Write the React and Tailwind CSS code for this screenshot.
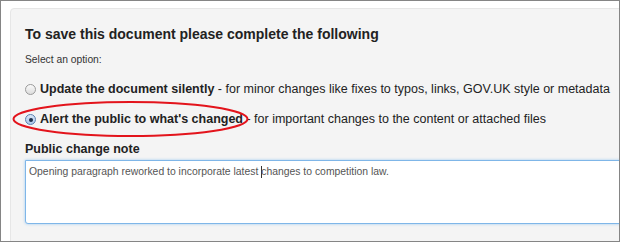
export default function App() {
  return (
    <div
      className="w-[620px] h-[242px] border border-[#858585] bg-white overflow-hidden relative"
      style={{ fontFamily: '"Liberation Sans", Arial, sans-serif' }}
    >
      <div className="mt-[7px] ml-[9px] w-[700px] h-[300px] bg-[#f4f4f4] border border-[#e6e6e6] rounded-tl-[4px] pl-[14px] pt-[17px]">
        <h2 className="text-[14px] font-bold text-[#222] leading-[17px]">
          To save this document please complete the following
        </h2>
        <p className="text-[10.3px] text-[#333] mt-[10px] leading-[13px]">Select an option:</p>
        <div className="mt-[16px] flex items-center gap-[4px] text-[12.5px] text-[#222] leading-[15px]">
          <span className="w-[11px] h-[11px] rounded-full border border-[#9a9a9a] bg-gradient-to-b from-[#fafafa] to-[#dcdcdc] shrink-0" />
          <span>
            <b>Update the document silently</b> - for minor changes like fixes to typos, links, GOV.UK style or metadata
          </span>
        </div>
        <div className="mt-[15px] flex items-center gap-[4px] text-[12.5px] text-[#222] leading-[15px] relative">
          <span className="w-[11px] h-[11px] rounded-full border border-[#5a7fb0] bg-gradient-to-b from-[#dbe8f7] to-[#a9c6ea] shrink-0 flex items-center justify-center">
            <span className="w-[4px] h-[4px] rounded-full bg-[#1d2f4a]" />
          </span>
          <span>
            <b>Alert the public to what's changed</b> - for important changes to the content or attached files
          </span>
          <svg
            className="absolute left-[-13px] top-[-17px]"
            width="240"
            height="44"
            viewBox="0 0 240 44"
          >
            <ellipse cx="118.5" cy="24" rx="117" ry="17" fill="none" stroke="#e3141c" strokeWidth="2" />
          </svg>
        </div>
        <p className="text-[12.5px] font-bold text-[#222] mt-[15px] leading-[15px]">Public change note</p>
        <div className="mt-[3px] h-[64px] bg-white border border-[#7fb6e8] rounded-bl-[3px] shadow-[0_0_3px_#9cc8f0] pl-[3px] pt-[4px] text-[10.4px] text-[#555] leading-[13px]">
          Opening paragraph reworked to incorporate latest <span className="inline-block w-px h-[12px] bg-[#333] align-middle -mr-px" />changes to competition law.
        </div>
      </div>
    </div>
  );
}
